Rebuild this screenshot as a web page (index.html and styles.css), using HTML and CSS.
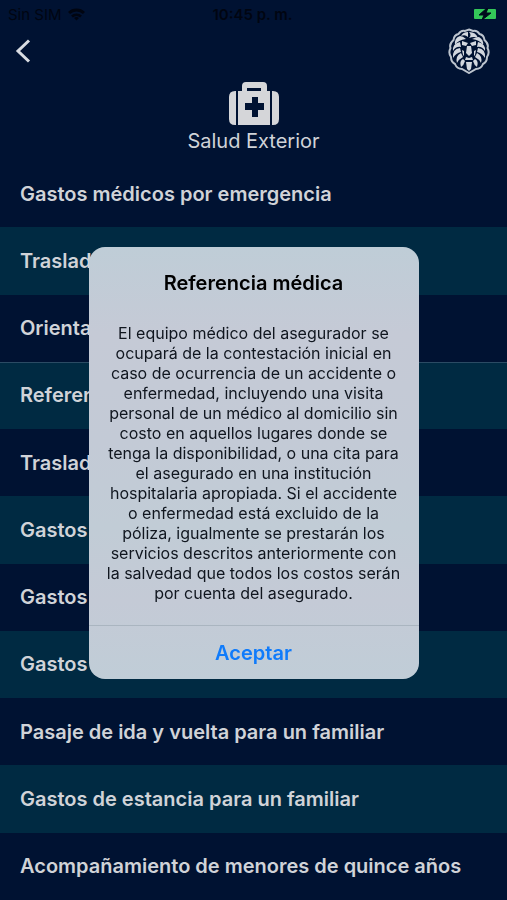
FILE: index.html
```
<!DOCTYPE html>
<html lang="es">
<head>
    <meta charset="UTF-8">
    <meta name="viewport" content="width=device-width, initial-scale=1.0">
    <title>Salud Exterior</title>
    <link rel="stylesheet" href="styles.css">
</head>
<body>
<div class="screen">
    <div class="status-bar">
        <div class="carrier">
            <span>Sin SIM</span>
            <svg width="17" height="13" viewBox="0 0 17 13" fill="none" stroke="#000511" stroke-width="3">
                <path d="M1 5C5 1 12 1 16 5"/>
                <path d="M4 8.500C6.500 6 10.500 6 13 8.500" stroke-width="2.500"/>
                <path d="M8.500 12.500L6 10Q8.500 8 11 10Z" fill="#000511" stroke="none"/>
            </svg>
        </div>
        <span class="clock">10:45 p. m.</span>
        <div class="battery">
            <svg width="24" height="12" viewBox="0 0 24 12">
                <rect x="1" y="1" width="22" height="10" rx="1" fill="#34c759"/>
                <path d="M14 0L6 7H11L9 12L18 5H13L15 0Z" fill="#000a1c" stroke="#000a1c"/>
            </svg>
        </div>
    </div>
    <header class="nav-bar">
        <button type="button" class="back-button" aria-label="Regresar">
            <svg width="16" height="24" viewBox="0 0 16 24" fill="none" stroke="#d8dce2" stroke-width="3">
                <path d="M14 1.500L3 12L14 22.500"/>
            </svg>
        </button>
        <svg class="logo" width="42" height="46" viewBox="0 0 42 46">
            <path d="M21 1.500L25 3Q29 2 31.500 6Q36 7 36.500 12Q41 16 39.500 20Q42 25 39 29Q39 34 35 36Q33 41 28 41L21 45L14 41Q9 41 7 36Q3 34 3 29Q0 25 2.500 20Q1 16 5.500 12Q6 7 10.500 6Q13 2 17 3Z" fill="#001232" stroke="#bcc4ce" stroke-width="2"/>
            <g fill="#d2d7de">
                <path d="M20 4Q15 4 13 8Q17 6 20 9Z"/>
                <path d="M21 4Q28 4 30 10Q26 8 21 10Q24 7 21 4Z"/>
                <path d="M12 8Q6 10 7 17Q10 12 18 11Q15 8 12 8Z"/>
                <path d="M31 9Q36 12 35 17Q32 12 24 11Q28 9 31 9Z"/>
                <path d="M12 14Q4 16 5 23Q8 18 13 19Z"/>
                <path d="M30 14Q38 16 37 23Q34 18 29 19Z"/>
                <path d="M12 20Q4 21 5 30Q8 25 13 24Z"/>
                <path d="M30 20Q38 21 37 30Q34 25 29 24Z"/>
                <path d="M13 25Q7 28 9 35Q11 31 15 29Z"/>
                <path d="M29 25Q35 28 33 35Q31 31 27 29Z"/>
                <path d="M15 31Q11 33 13 39Q16 37 17 33Z"/>
                <path d="M27 31Q31 33 29 39Q26 37 25 33Z"/>
                <path d="M18 34H24L23 41L21 43L19 41Z"/>
                <path d="M14 13L20 15L18 18L14 17Z"/>
                <path d="M28 13L22 15L24 18L28 17Z"/>
                <path d="M19 18H23L24 25L21 28L18 25Z"/>
                <path d="M14 22L16 23L16 28L15 27Z"/>
                <path d="M28 22L26 23L26 28L27 27Z"/>
                <path d="M18 29L21 30L24 29L25 32H17Z"/>
            </g>
        </svg>
    </header>
    <div class="category">
        <svg width="50" height="44" viewBox="0 0 50 44" fill="#d5d6d9">
            <path d="M6 9H7V43H6Q0 43 0 37V15Q0 9 6 9Z"/>
            <path d="M43 9H44Q50 9 50 15V37Q50 43 44 43H43Z"/>
            <path fill-rule="evenodd" d="M9 9H13V4Q13 0 17 0H34Q38 0 38 4V9H41V43H9ZM18 6V9H32V6ZM23 15V21H16V28H23V35H29V28H35V21H29V15Z"/>
        </svg>
        <h1>Salud Exterior</h1>
    </div>
    <ul class="coverage-list">
        <li>Gastos médicos por emergencia</li>
        <li>Traslado</li>
        <li>Orientación</li>
        <li class="selected">Referencia</li>
        <li>Traslado</li>
        <li>Gastos</li>
        <li>Gastos</li>
        <li>Gastos</li>
        <li>Pasaje de ida y vuelta para un familiar</li>
        <li>Gastos de estancia para un familiar</li>
        <li>Acompañamiento de menores de quince años</li>
    </ul>
</div>
<div class="overlay">
    <div class="alert" role="alertdialog" aria-modal="true" aria-labelledby="alertTitle" aria-describedby="alertText">
        <div class="alert-body">
            <h2 id="alertTitle">Referencia médica</h2>
            <p id="alertText">El equipo médico del asegurador se ocupará de la contestación inicial en caso de ocurrencia de un accidente o enfermedad, incluyendo una visita personal de un médico al domicilio sin costo en aquellos lugares donde se tenga la disponibilidad, o una cita para el asegurado en una institución hospitalaria apropiada. Si el accidente o enfermedad está excluido de la póliza, igualmente se prestarán los servicios descritos anteriormente con la salvedad que todos los costos serán por cuenta del asegurado.</p>
        </div>
        <button type="button" class="accept-button">Aceptar</button>
    </div>
</div>
</body>
</html>
```
FILE: styles.css
```
* {
    box-sizing: border-box;
}
body {
    margin: 0;
    background-color: #001232;
    font-family: Inter, "Liberation Sans", sans-serif;
    color: #d0d3d8;
}
.screen {
    min-height: 100vh;
    display: flex;
    flex-direction: column;
}
.status-bar {
    display: grid;
    grid-template-columns: 1fr auto 1fr;
    align-items: center;
    height: 28px;
    padding: 0 10px 0 8px;
    font-size: 15px;
    color: #000511;
}
.carrier {
    display: flex;
    align-items: center;
    gap: 6px;
}
.clock {
    font-weight: 600;
}
.battery {
    display: flex;
    justify-content: flex-end;
}
.nav-bar {
    display: flex;
    justify-content: space-between;
    align-items: center;
    height: 46px;
    padding: 0 17px 0 15px;
}
.back-button {
    display: flex;
    padding: 0;
    border: none;
    background: none;
    cursor: pointer;
}
.category {
    display: flex;
    flex-direction: column;
    align-items: center;
    height: 86px;
    padding-top: 8px;
}
.category h1 {
    margin: 2px 0 0;
    font-size: 20px;
    line-height: 26px;
    font-weight: 400;
}
.coverage-list {
    flex: 1;
    display: flex;
    flex-direction: column;
    margin: 0;
    padding: 0;
    list-style: none;
}
.coverage-list li {
    flex: 1 0 auto;
    display: flex;
    align-items: center;
    min-height: 60px;
    padding: 0 20px;
    font-size: 20px;
    font-weight: 600;
}
.coverage-list li:nth-child(even) {
    background-color: #002a42;
}
.coverage-list .selected {
    box-shadow: inset 0 1px #2b4b64;
}
.overlay {
    position: fixed;
    inset: 0;
    display: flex;
    align-items: center;
    justify-content: center;
    padding-top: 26px;
}
.alert {
    width: 330px;
    overflow: hidden;
    border-radius: 16px;
    background: linear-gradient(#bfcdd7, #c5cad6 20%, #c3cad6 45%, #c1ccd6 65%, #c4cad6 82%, #c0cdd7);
    color: #10161f;
    text-align: center;
}
.alert-body {
    padding: 23px 16px 22px;
}
.alert h2 {
    margin: 0 0 27px;
    font-size: 20px;
    line-height: 26px;
    font-weight: 600;
    color: #000;
}
.alert p {
    margin: 0;
    font-size: 16px;
    line-height: 20px;
}
.accept-button {
    width: 100%;
    height: 54px;
    border: none;
    border-top: 1px solid #aab5c0;
    background: none;
    font-family: inherit;
    font-size: 20px;
    font-weight: 600;
    color: #0f7bfb;
    cursor: pointer;
}
```
